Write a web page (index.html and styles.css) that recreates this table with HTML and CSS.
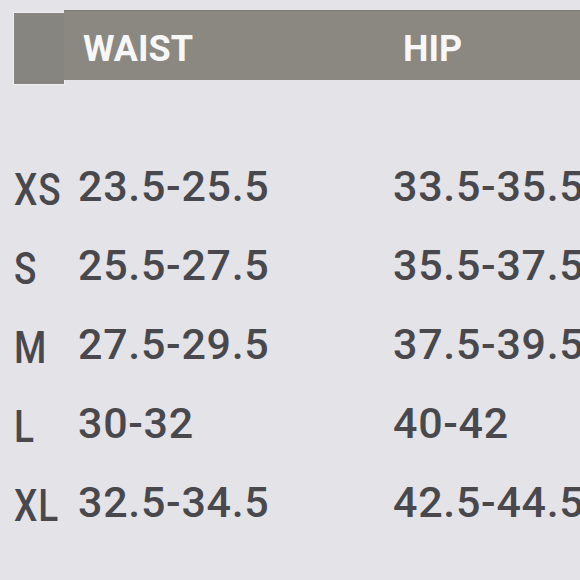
FILE: index.html
```html
<!DOCTYPE html>
<html>
<head>
<meta charset="utf-8">
<link rel="stylesheet" href="styles.css">
</head>
<body>
<div class="chart">
  <div class="head">
    <div class="head-stub"></div>
    <div class="head-bar">
      <span class="head-cell">WAIST</span>
      <span class="head-cell head-hip">HIP</span>
    </div>
  </div>
  <div class="rows">
    <div class="row"><span class="size">XS</span><span class="val">23.5-25.5</span><span class="val">33.5-35.5</span></div>
    <div class="row"><span class="size">S</span><span class="val">25.5-27.5</span><span class="val">35.5-37.5</span></div>
    <div class="row"><span class="size">M</span><span class="val">27.5-29.5</span><span class="val">37.5-39.5</span></div>
    <div class="row"><span class="size">L</span><span class="val">30-32</span><span class="val">40-42</span></div>
    <div class="row"><span class="size">XL</span><span class="val">32.5-34.5</span><span class="val">42.5-44.5</span></div>
  </div>
</div>
</body>
</html>
```

FILE: styles.css
```css
html, body {
  margin: 0;
  padding: 0;
}
body {
  width: 580px;
  height: 580px;
  overflow: hidden;
  background: #e4e3e8;
  font-family: Roboto, "Liberation Sans", sans-serif;
}
.chart {
  padding-top: 10px;
}
.head {
  display: flex;
  align-items: flex-start;
  padding-left: 14px;
}
.head-stub {
  width: 50px;
  height: 71px;
  margin-top: 3px;
  background: #878580;
  box-shadow: 0 0 0 1px #efeef2;
}
.head-bar {
  flex: 1;
  height: 70px;
  box-sizing: border-box;
  padding: 7px 0 0 19px;
  background: #8a8881;
  border-top: 1px solid #7f7a73;
  display: grid;
  grid-template-columns: 320px 1fr;
  align-items: center;
  color: #f7f7f7;
  font-weight: 700;
  font-size: 36px;
  letter-spacing: 0;
}
.rows {
  margin-top: 63px;
}
.row {
  display: grid;
  grid-template-columns: 64px 315px 1fr;
  height: 79px;
  line-height: 79px;
  padding-left: 14px;
  white-space: nowrap;
  color: #48484d;
}
.size {
  display: block;
  padding-top: 4px;
  font-size: 44px;
  font-weight: 500;
  letter-spacing: 1px;
  transform: scaleX(0.84);
  transform-origin: left center;
}
.val {
  font-size: 43px;
  font-weight: 500;
  letter-spacing: 0.7px;
}
```
